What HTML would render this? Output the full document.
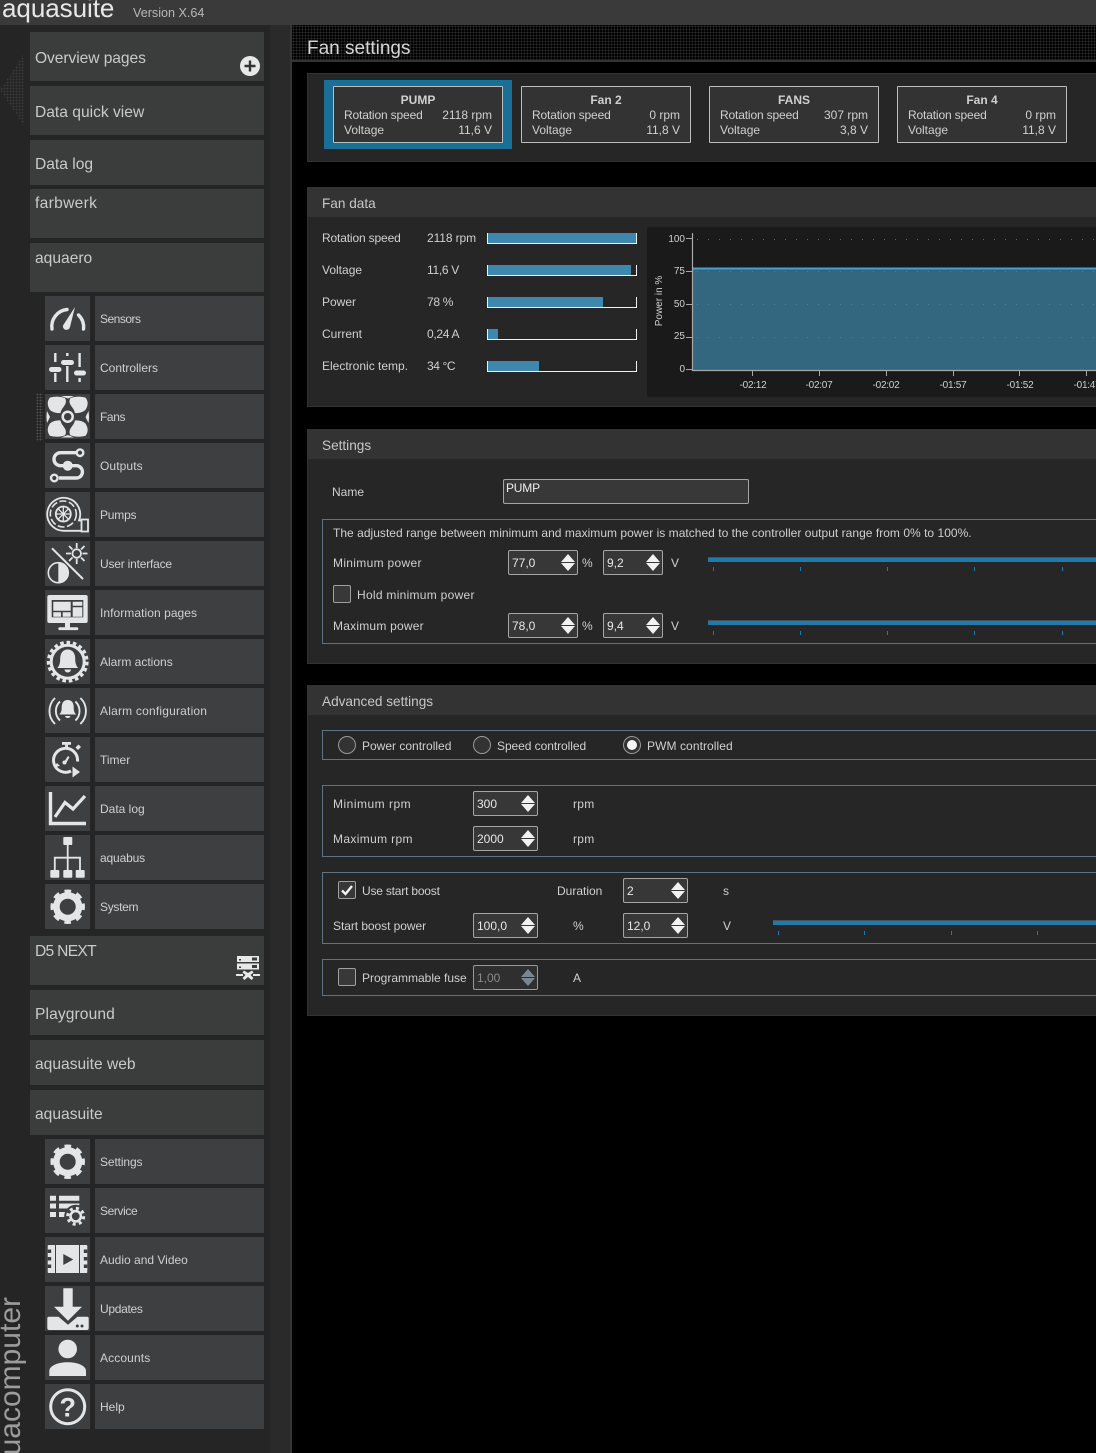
<!DOCTYPE html>
<html><head><meta charset="utf-8"><title>aquasuite</title>
<style>
html,body{margin:0;padding:0;background:#000;}
#r{position:relative;width:1096px;height:1453px;overflow:hidden;background:#000;font-family:"Liberation Sans",sans-serif;font-size:12px;color:#cfd0d0;}
#r div,#r svg{position:absolute;}
.t{position:absolute;white-space:pre;line-height:16px;}
.m{left:30px;width:234px;background:#3b3d3d;}
.i{left:45px;width:45px;height:45px;background:#3d3f41;}
.l{left:95px;width:169px;height:45px;background:#3d3f41;}
.mt{left:35px;font-size:15.6px;line-height:18px;color:#c9caca;}
.lt{left:100px;color:#cfd0d0;}
.p{left:307px;width:800px;background:#262626;border:1px solid #333;box-sizing:border-box;}
.h{left:307px;width:800px;height:30px;background:#333;}
.ht{left:322px;font-size:13.6px;color:#c8c8c8;}
.c{width:170px;height:57px;background:#333;border:1px solid #bdbdbd;box-sizing:border-box;border-radius:1px;}
.b{left:487px;width:150px;border:solid #f0f0f0;border-width:0 1px 1px 1px;box-sizing:border-box;height:11px;}
.f{left:488px;height:10px;background:#3e87ad;}
.box{left:322px;width:800px;border:1px solid #5f7385;box-sizing:border-box;}
.s{background:#373737;border:1px solid #a5a5a5;box-sizing:border-box;height:25px;border-radius:2px;color:#e8e8e8;line-height:25px;padding-left:3px;}
.s:before{content:"";position:absolute;right:2px;top:3px;border:solid transparent;border-width:0 7px 8px;border-bottom-color:#f2f2f2;}
.s:after{content:"";position:absolute;right:2px;bottom:3px;border:solid transparent;border-width:8px 7px 0;border-top-color:#f2f2f2;}
.s.d{color:#8a8a8a;border-color:#999;background:#2f2f2f;}
.s.d:before{border-bottom-color:#7b8790;}.s.d:after{border-top-color:#7b8790;}
.k{width:18px;height:18px;background:#383838;border:1px solid #a0a0a0;box-sizing:border-box;border-radius:2px;}
.o{width:18px;height:18px;background:#333;border:1px solid #9a9a9a;box-sizing:border-box;border-radius:50%;}
.tr{height:5px;background:#1f7ba9;border-top:1px solid #3f5660;box-sizing:border-box;}
.tk{width:1px;height:4px;background:#0f80b8;}
.rs{letter-spacing:-.15px;}
</style></head><body><div id="r">

<div style="left:0;top:25px;width:270px;height:1428px;background:#252525"></div>
<div style="left:270px;top:25px;width:20px;height:1428px;background:#2a2a2a"></div>
<div style="left:290px;top:25px;width:2px;height:1428px;background:#363636"></div>
<div style="left:0;top:0;width:1096px;height:25px;background:#3a3a3a"></div>
<div class="t" style="left:2px;top:-7px;font-size:26px;line-height:30px;color:#e8e8e8;letter-spacing:-.05px">aquasuite</div>
<div class="t" style="left:133px;top:5px;font-size:12.6px;color:#b8b8b8">Version X.64</div>

<div style="left:0;top:54px;width:24px;height:72px;background:radial-gradient(circle at 1.5px 1.5px,#3c3c3c .7px,transparent 1px) 0 0/3px 3px;clip-path:polygon(0 50%,100% 0,100% 100%)"></div>
<div style="left:36px;top:393px;width:7px;height:48px;background:radial-gradient(circle at 1.5px 1.5px,#4c4c4c .8px,transparent 1px) 0 0/3px 3px"></div>

<div class="m" style="top:32px;height:49px"></div><div class="t mt" style="top:50px;letter-spacing:-.07px">Overview pages</div>
<svg style="left:240px;top:56px" width="20" height="20"><circle cx="10" cy="10" r="10" fill="#e8e8e8"/><path d="M10 4.5v11M4.5 10h11" stroke="#333" stroke-width="2.4"/></svg>
<div class="m" style="top:86px;height:49px"></div><div class="t mt" style="top:104px">Data quick view</div>
<div class="m" style="top:140px;height:45px"></div><div class="t mt" style="top:156px">Data log</div>
<div class="m" style="top:189px;height:49px"></div><div class="t mt" style="top:195px;letter-spacing:.3px">farbwerk</div>
<div class="m" style="top:243px;height:49px"></div><div class="t mt" style="top:250px">aquaero</div>
<div class="m" style="top:936px;height:49px"></div><div class="t mt" style="top:943px;letter-spacing:-.7px">D5 NEXT</div>
<div class="m" style="top:990px;height:45px"></div><div class="t mt" style="top:1006px;letter-spacing:.1px">Playground</div>
<div class="m" style="top:1040px;height:45px"></div><div class="t mt" style="top:1056px">aquasuite web</div>
<div class="m" style="top:1090px;height:45px"></div><div class="t mt" style="top:1106px">aquasuite</div>
<svg style="left:236px;top:955px" width="24" height="27" fill="#e8e8e8"><rect x="1" y="1" width="22" height="6"/><rect x="1" y="8.5" width="22" height="6"/><path d="M16 2.5h5v3h-5zM16 10h5v3h-5zM3 4h2v1.500H3zM3 11.500h2V13H3z" fill="#3b3d3d"/><path d="M0 20h7M17 20h7" stroke="#e8e8e8" stroke-width="2"/><path d="M8 15.500l4 2.500 4-2.500 1.500 2-3 2.500 3 3-2 2-3.500-3-3.500 3-2-2 3-3-3-2.500z"/></svg>

<!-- sub rows -->
<div class="i" style="top:296px"></div><div class="l" style="top:296px"></div><div class="t lt" style="top:311px;letter-spacing:-.5px">Sensors</div>
<div class="i" style="top:345px"></div><div class="l" style="top:345px"></div><div class="t lt" style="top:360px">Controllers</div>
<div class="i" style="top:394px"></div><div class="l" style="top:394px"></div><div class="t lt" style="top:409px;letter-spacing:-.4px">Fans</div>
<div class="i" style="top:443px"></div><div class="l" style="top:443px"></div><div class="t lt" style="top:458px;letter-spacing:.1px">Outputs</div>
<div class="i" style="top:492px"></div><div class="l" style="top:492px"></div><div class="t lt" style="top:507px;letter-spacing:-.2px">Pumps</div>
<div class="i" style="top:541px"></div><div class="l" style="top:541px"></div><div class="t lt" style="top:556px;letter-spacing:-.2px">User interface</div>
<div class="i" style="top:590px"></div><div class="l" style="top:590px"></div><div class="t lt" style="top:605px;letter-spacing:.06px">Information pages</div>
<div class="i" style="top:639px"></div><div class="l" style="top:639px"></div><div class="t lt" style="top:654px">Alarm actions</div>
<div class="i" style="top:688px"></div><div class="l" style="top:688px"></div><div class="t lt" style="top:703px;letter-spacing:.2px">Alarm configuration</div>
<div class="i" style="top:737px"></div><div class="l" style="top:737px"></div><div class="t lt" style="top:752px">Timer</div>
<div class="i" style="top:786px"></div><div class="l" style="top:786px"></div><div class="t lt" style="top:801px">Data log</div>
<div class="i" style="top:835px"></div><div class="l" style="top:835px"></div><div class="t lt" style="top:850px;letter-spacing:-.15px">aquabus</div>
<div class="i" style="top:884px"></div><div class="l" style="top:884px"></div><div class="t lt" style="top:899px;letter-spacing:-.3px">System</div>
<div class="i" style="top:1139px"></div><div class="l" style="top:1139px"></div><div class="t lt" style="top:1154px;letter-spacing:-.12px">Settings</div>
<div class="i" style="top:1188px"></div><div class="l" style="top:1188px"></div><div class="t lt" style="top:1203px;letter-spacing:-.4px">Service</div>
<div class="i" style="top:1237px"></div><div class="l" style="top:1237px"></div><div class="t lt" style="top:1252px">Audio and Video</div>
<div class="i" style="top:1286px"></div><div class="l" style="top:1286px"></div><div class="t lt" style="top:1301px;letter-spacing:-.3px">Updates</div>
<div class="i" style="top:1335px"></div><div class="l" style="top:1335px"></div><div class="t lt" style="top:1350px;letter-spacing:.12px">Accounts</div>
<div class="i" style="top:1384px"></div><div class="l" style="top:1384px"></div><div class="t lt" style="top:1399px">Help</div>

<!-- icons -->
<svg style="left:0;top:0" width="300" height="1453" fill="#e3e5e7" stroke="none">
<text transform="translate(20,1297) rotate(-90)" text-anchor="end" font-family="Liberation Sans" font-size="30" fill="#9c9c9c">aquacomputer</text>
<!-- sensors -->
<g transform="translate(45,296)"><path d="M7 33A17 17 0 0 1 22 13.500" fill="none" stroke="#e3e5e7" stroke-width="3.400" stroke-linecap="round"/><path d="M33.500 19A17 17 0 0 1 38.500 33" fill="none" stroke="#e3e5e7" stroke-width="3.400" stroke-linecap="round"/><path d="M30 11L25 31a3.500 3.500 0 0 1-7-1.500z"/></g>
<!-- controllers -->
<g transform="translate(45,345)"><path d="M10.300 8v9M10.300 28v9M22.300 8v3M22.300 21v16M34.600 8v14M34.600 33v4" stroke="#e3e5e7" stroke-width="2.400" fill="none"/><rect x="4" y="22" width="12.500" height="5" rx="2.500"/><rect x="16" y="15" width="13" height="5" rx="2.500"/><rect x="29" y="25.500" width="12" height="5" rx="2.500"/></g>
<!-- fans -->
<g transform="translate(45,394)"><g id="bl"><path id="b1" d="M5 3.500Q13 1.500 20 4Q22.500 8 18.500 13Q16 16 15.500 19Q9 19.500 5 16Q0.500 9 5 3.500z"/></g><use href="#b1" transform="matrix(-1 0 0 1 45.400 0)"/><use href="#b1" transform="matrix(1 0 0 -1 0 45.400)"/><use href="#b1" transform="matrix(-1 0 0 -1 45.400 45.400)"/><path d="M2 17Q1 23 2 29l3-6zM43.500 17Q44.500 23 43.500 29l-3-6zM16 2h13l-6 2.500zM16 43.500h13l-6-2.500z"/><circle cx="22.700" cy="22.700" r="5" fill="#3d3f41" stroke="#e3e5e7" stroke-width="2.500"/></g>
<!-- outputs -->
<g transform="translate(45,443)" fill="none" stroke="#e3e5e7"><path d="M31 9.700H15.500a6.500 6.500 0 0 0 0 13H32a6.200 6.200 0 0 1 0 12.300H14" stroke-width="3.400"/><circle cx="35" cy="9.700" r="3.300" stroke-width="2.400"/><circle cx="9.300" cy="35" r="3.300" stroke-width="2.400"/><circle cx="22.700" cy="22.700" r="5" fill="#e3e5e7" stroke="none"/></g>
<!-- pumps -->
<g transform="translate(45,492)" fill="none" stroke="#e3e5e7"><path d="M36 28.500H34A16.500 16.500 0 1 0 18.300 38.800H36" stroke-width="1.800"/><rect x="36.500" y="27.500" width="6.500" height="12" stroke-width="1.800"/><circle cx="18.300" cy="22" r="13" stroke-width="1.600" stroke-dasharray="7 2.500"/><circle cx="18.300" cy="22" r="7.500" stroke-width="1.800"/><path d="M18.300 14.500v15M10.800 22h15M13 16.700l10.600 10.600M23.600 16.700L13 27.300" stroke-width="1.300"/></g>
<!-- UI -->
<g transform="translate(45,541)"><path d="M7 7.300L38 38" stroke="#e3e5e7" stroke-width="2" fill="none"/><path d="M31.700 2v5M31.700 18v5M21 12.500h5M37.500 12.500h5M24 5l3.500 3.500M36 16.500l3.500 3.500M39.500 5L36 8.500M27.500 16.500L24 20" stroke="#e3e5e7" stroke-width="1.800" fill="none"/><circle cx="31.700" cy="12.500" r="4.300" fill="none" stroke="#e3e5e7" stroke-width="1.800"/><circle cx="13.300" cy="31.700" r="10" fill="none" stroke="#e3e5e7" stroke-width="1.600"/><path d="M13.300 21.700a10 10 0 0 1 0 20z"/></g>
<!-- info -->
<g transform="translate(45,590)"><rect x="2.300" y="5" width="40.400" height="28" rx="2"/><rect x="6.700" y="10" width="31.600" height="17.300" fill="#3d3f41"/><path d="M8.300 11.700h17.400v9H8.300zM27.700 11.700h9.600v4h-9.600zM27.700 17.300h9.600v9.400h-9.600zM8.300 22.300H16v4.400H8.300zM17.700 22.300h8v4.400h-8zM20 33h5v4.500h-5z"/><rect x="13.300" y="37.300" width="20" height="2.800" rx="1.400"/></g>
<!-- alarm actions -->
<g transform="translate(45,639)"><circle cx="22.700" cy="22.700" r="16.500" fill="none" stroke="#e3e5e7" stroke-width="3"/><circle cx="22.700" cy="22.700" r="19.300" fill="none" stroke="#e3e5e7" stroke-width="3.200" stroke-dasharray="3.600 2.800"/><path d="M22.700 10.500c-5 0-7.500 4-7.500 9 0 5-1 7.500-3 9.500h21c-2-2-3-4.500-3-9.500 0-5-2.500-9-7.500-9z"/><path d="M19.500 30.500h6.500a3.200 3 0 0 1-6.500 0z"/></g>
<!-- alarm config -->
<g transform="translate(45,688)"><path d="M22.700 12c-4 0-6 3-6 7 0 4-.8 6-2.500 7.500h17c-1.700-1.500-2.500-3.500-2.500-7.500 0-4-2-7-6-7z"/><path d="M20 28h5.500a2.800 2.500 0 0 1-5.500 0z"/><path d="M10 10A18 18 0 0 0 10 36M15 13.500A13 13 0 0 0 15 32.500M35.400 10A18 18 0 0 1 35.400 36M30.400 13.500A13 13 0 0 1 30.400 32.500" fill="none" stroke="#e3e5e7" stroke-width="1.900"/></g>
<!-- timer -->
<g transform="translate(45,737)"><path d="M17 5h9v2.800h-9z"/><path d="M20.200 7h2.800v5h-2.800z"/><path d="M30.500 10.500l3-3 2.500 2.500-3 3z"/><path d="M26 34A12 12 0 1 1 32.500 24.500" fill="none" stroke="#e3e5e7" stroke-width="3"/><path d="M9 30l3-4 3 3z"/><path d="M19 25l4-6 1.500 1-3.500 6.500z"/><circle cx="19.500" cy="25.500" r="2"/><path d="M27.500 29.500L35 35l-7.500 5.500z"/></g>
<!-- data log -->
<g transform="translate(45,786)" fill="none" stroke="#e3e5e7"><path d="M5.500 6V37.500H41" stroke-width="3.400"/><path d="M10 31L20 16.500 28 23 40 10" stroke-width="3.200"/></g>
<!-- aquabus -->
<g transform="translate(45,835)"><rect x="18.300" y="2" width="9" height="8" rx="1"/><path d="M22.700 10V35M9.800 35V22.700H35V35" fill="none" stroke="#e3e5e7" stroke-width="1.800"/><rect x="5.300" y="35" width="9" height="7.700" rx="1"/><rect x="18.300" y="35" width="9" height="7.700" rx="1"/><rect x="30.700" y="35" width="9" height="7.700" rx="1"/></g>
<!-- gears -->
<g transform="translate(45,884)"><circle cx="22.700" cy="22.700" r="11.300" fill="none" stroke="#e3e5e7" stroke-width="6.600"/><circle cx="22.700" cy="22.700" r="15" fill="none" stroke="#e3e5e7" stroke-width="4.500" stroke-dasharray="6.300 5.480" stroke-dashoffset="3.150"/></g>
<g transform="translate(45,1139)"><circle cx="22.700" cy="22.700" r="11.300" fill="none" stroke="#e3e5e7" stroke-width="6.600"/><circle cx="22.700" cy="22.700" r="15" fill="none" stroke="#e3e5e7" stroke-width="4.500" stroke-dasharray="6.300 5.480" stroke-dashoffset="3.150"/></g>
<!-- service -->
<g transform="translate(45,1188)"><path d="M5 7.700h6v5H5zM14 7.700h20.300v5H14zM5 15.500h6v5H5zM14 15.500h20.300v5H14zM5 24h6v5H5zM14 24h9v5H14z"/><circle cx="30.700" cy="28.300" r="11.500" fill="#3d3f41"/><circle cx="30.700" cy="28.300" r="5.200" fill="none" stroke="#e3e5e7" stroke-width="2.600"/><circle cx="30.700" cy="28.300" r="8" fill="none" stroke="#e3e5e7" stroke-width="3" stroke-dasharray="3 3.280"/></g>
<!-- av -->
<g transform="translate(45,1237)"><rect x="2.700" y="8" width="39.600" height="28" rx="1"/><path d="M2.700 12.500h3.500v3.500H2.700zM2.700 20h3.500v3.500H2.700zM2.700 27.500h3.500V31H2.700zM38.800 12.500h3.500v3.500h-3.500zM38.800 20h3.500v3.500h-3.500zM38.800 27.500h3.500V31h-3.500zM18.300 17l10 5.500-10 5.500z" fill="#3d3f41"/><path d="M10 8h1v28h-1zM34 8h1v28h-1z" fill="#3d3f41"/></g>
<!-- updates -->
<g transform="translate(45,1286)"><path d="M18.300 2.300h9.400v18.400H37L23 34.700 9 20.700h9.300z"/><path d="M4 30.700h9.500l9.500 8 9.500-8H42a1.700 1.700 0 0 1 1.700 1.700V42a2 2 0 0 1-2 2H4.300a2 2 0 0 1-2-2V32.400a1.700 1.700 0 0 1 1.700-1.700z"/><circle cx="32.300" cy="40" r="1.500" fill="#3d3f41"/><circle cx="37" cy="40" r="1.500" fill="#3d3f41"/></g>
<!-- accounts -->
<g transform="translate(45,1335)"><circle cx="22.700" cy="14" r="9.300"/><path d="M4.300 41v-5c0-5 8-8.700 18.400-8.700S41 31 41 36v5z"/></g>
<!-- help -->
<g transform="translate(45,1384)"><circle cx="22.700" cy="22.700" r="17" fill="none" stroke="#e3e5e7" stroke-width="3"/><text x="22.700" y="32.500" text-anchor="middle" font-family="Liberation Sans" font-weight="bold" font-size="27">?</text></g>
</svg>

<!-- main title -->
<div style="left:292px;top:25px;width:804px;height:36px;background:radial-gradient(circle at 1.500px 1.500px,#2e2e2e .9px,transparent 1.100px) 0 0/3px 3px"></div>
<div style="left:292px;top:60px;width:804px;height:2px;background:#333"></div>
<div class="t" style="left:307px;top:38px;font-size:19px;line-height:22px;color:#d6d6d6">Fan settings</div>

<!-- cards panel -->
<div class="p" style="top:73px;height:89px"></div>
<div style="left:324px;top:80px;width:188px;height:69px;background:#1a6f96"></div>
<div class="c" style="left:333px;top:86px"></div>
<div class="c" style="left:521px;top:86px"></div>
<div class="c" style="left:709px;top:86px"></div>
<div class="c" style="left:897px;top:86px"></div>
<div class="t" style="left:333px;width:170px;text-align:center;top:92px;font-weight:bold">PUMP</div>
<div class="t rs" style="left:344px;top:107px">Rotation speed</div><div class="t" style="left:344px;top:122px">Voltage</div>
<div class="t" style="right:604px;top:107px">2118 rpm</div><div class="t" style="right:604px;top:122px">11,6 V</div>
<div class="t" style="left:521px;width:170px;text-align:center;top:92px;font-weight:bold">Fan 2</div>
<div class="t rs" style="left:532px;top:107px">Rotation speed</div><div class="t" style="left:532px;top:122px">Voltage</div>
<div class="t" style="right:416px;top:107px">0 rpm</div><div class="t" style="right:416px;top:122px">11,8 V</div>
<div class="t" style="left:709px;width:170px;text-align:center;top:92px;font-weight:bold">FANS</div>
<div class="t rs" style="left:720px;top:107px">Rotation speed</div><div class="t" style="left:720px;top:122px">Voltage</div>
<div class="t" style="right:228px;top:107px">307 rpm</div><div class="t" style="right:228px;top:122px">3,8 V</div>
<div class="t" style="left:897px;width:170px;text-align:center;top:92px;font-weight:bold">Fan 4</div>
<div class="t rs" style="left:908px;top:107px">Rotation speed</div><div class="t" style="left:908px;top:122px">Voltage</div>
<div class="t" style="right:40px;top:107px">0 rpm</div><div class="t" style="right:40px;top:122px">11,8 V</div>

<!-- fan data -->
<div class="p" style="top:187px;height:220px"></div><div class="h" style="top:187px"></div>
<div class="t ht" style="top:196px">Fan data</div>
<div class="t rs" style="left:322px;top:230px">Rotation speed</div><div class="t" style="left:427px;top:230px;letter-spacing:-.1px">2118 rpm</div>
<div class="t" style="left:322px;top:262px">Voltage</div><div class="t" style="left:427px;top:262px;letter-spacing:-.3px">11,6 V</div>
<div class="t" style="left:322px;top:294px">Power</div><div class="t" style="left:427px;top:294px;letter-spacing:-.3px">78 %</div>
<div class="t" style="left:322px;top:326px">Current</div><div class="t" style="left:427px;top:326px;letter-spacing:-.3px">0,24 A</div>
<div class="t" style="left:322px;top:358px">Electronic temp.</div><div class="t" style="left:427px;top:358px;letter-spacing:-.4px">34 °C</div>
<div class="b" style="top:233px"></div><div class="f" style="top:233px;width:148px"></div>
<div class="b" style="top:265px"></div><div class="f" style="top:265px;width:143px"></div>
<div class="b" style="top:297px"></div><div class="f" style="top:297px;width:115px"></div>
<div class="b" style="top:329px"></div><div class="f" style="top:329px;width:10px"></div>
<div class="b" style="top:361px"></div><div class="f" style="top:361px;width:51px"></div>

<svg style="left:647px;top:227px" width="449" height="170" font-family="Liberation Sans" font-size="10" fill="#d0d0d0">
<rect width="460" height="170" rx="2" fill="#1a1a1a"/>
<rect x="46" y="41" width="403" height="102" fill="#33667f"/>
<rect x="46" y="40.500" width="403" height="2" fill="#47a0cf"/>
<path d="M50 12.500H449" stroke="#666" stroke-width="1" stroke-dasharray="1 10" fill="none"/>
<path d="M50 44.500H449M50 77.500H449M50 110.500H449" stroke="#4f7d92" stroke-width="1" stroke-dasharray="1 10" fill="none"/>
<path d="M45.500 6V143.500H449" stroke="#a8a8a8" stroke-width="1.200" fill="none"/>
<path d="M39 11.500h6M39 44.500h6M39 77.500h6M39 110.500h6M39 142.500h6M105.500 143v6M172.500 143v6M239.500 143v6M306.500 143v6M372.500 143v6M439.500 143v6" stroke="#a8a8a8" stroke-width="1" fill="none"/>
<g text-anchor="end"><text x="38" y="15">100</text><text x="38" y="47">75</text><text x="38" y="80">50</text><text x="38" y="112">25</text><text x="38" y="145">0</text></g>
<g text-anchor="middle" letter-spacing="-.25"><text x="106" y="161">-02:12</text><text x="172" y="161">-02:07</text><text x="239" y="161">-02:02</text><text x="306" y="161">-01:57</text><text x="373" y="161">-01:52</text><text x="440" y="161">-01:47</text></g>
<text transform="translate(15,74) rotate(-90)" text-anchor="middle">Power in %</text>
</svg>

<!-- settings -->
<div class="p" style="top:429px;height:235px"></div><div class="h" style="top:429px"></div>
<div class="t ht" style="top:438px">Settings</div>
<div class="t" style="left:332px;top:484px">Name</div>
<div style="left:503px;top:479px;width:246px;height:25px;background:#383838;border:1px solid #a5a5a5;box-sizing:border-box;border-radius:2px"></div>
<div class="t" style="left:506px;top:480px;color:#eee;letter-spacing:-.2px">PUMP</div>
<div class="box" style="top:519px;height:125px"></div>
<div class="t" style="left:333px;top:525px;letter-spacing:.027px">The adjusted range between minimum and maximum power is matched to the controller output range from 0% to 100%.</div>
<div class="t" style="left:333px;top:555px;letter-spacing:.32px">Minimum power</div>
<div class="s" style="left:508px;top:550px;width:70px">77,0</div><div class="t" style="left:582px;top:555px">%</div>
<div class="s" style="left:603px;top:550px;width:60px">9,2</div><div class="t" style="left:671px;top:555px">V</div>
<div class="tr" style="left:708px;top:557px;width:388px"></div>
<div class="tk" style="left:713px;top:567px"></div><div class="tk" style="left:800px;top:567px"></div><div class="tk" style="left:887px;top:567px"></div><div class="tk" style="left:974px;top:567px"></div><div class="tk" style="left:1062px;top:567px"></div>
<div class="k" style="left:333px;top:585px"></div><div class="t" style="left:357px;top:587px;letter-spacing:.28px">Hold minimum power</div>
<div class="t" style="left:333px;top:618px;letter-spacing:.22px">Maximum power</div>
<div class="s" style="left:508px;top:613px;width:70px">78,0</div><div class="t" style="left:582px;top:618px">%</div>
<div class="s" style="left:603px;top:613px;width:60px">9,4</div><div class="t" style="left:671px;top:618px">V</div>
<div class="tr" style="left:708px;top:620px;width:388px"></div>
<div class="tk" style="left:713px;top:631px"></div><div class="tk" style="left:800px;top:631px"></div><div class="tk" style="left:887px;top:631px"></div><div class="tk" style="left:974px;top:631px"></div><div class="tk" style="left:1062px;top:631px"></div>

<!-- advanced -->
<div class="p" style="top:685px;height:331px"></div><div class="h" style="top:685px"></div>
<div class="t ht" style="top:694px">Advanced settings</div>
<div class="box" style="top:730px;height:30px"></div>
<div class="o" style="left:338px;top:736px"></div><div class="t" style="left:362px;top:738px">Power controlled</div>
<div class="o" style="left:473px;top:736px"></div><div class="t" style="left:497px;top:738px;letter-spacing:-.06px">Speed controlled</div>
<div class="o" style="left:623px;top:736px"></div><div style="left:627px;top:740px;width:10px;height:10px;border-radius:50%;background:#f5f5f5"></div><div class="t" style="left:647px;top:738px;letter-spacing:.08px">PWM controlled</div>

<div class="box" style="top:785px;height:72px"></div>
<div class="t" style="left:333px;top:796px;letter-spacing:.5px">Minimum rpm</div><div class="s" style="left:473px;top:791px;width:65px">300</div><div class="t" style="left:573px;top:796px;letter-spacing:.3px">rpm</div>
<div class="t" style="left:333px;top:831px;letter-spacing:.35px">Maximum rpm</div><div class="s" style="left:473px;top:826px;width:65px">2000</div><div class="t" style="left:573px;top:831px;letter-spacing:.3px">rpm</div>

<div class="box" style="top:872px;height:72px"></div>
<div class="k" style="left:338px;top:881px"></div>
<svg style="left:338px;top:881px" width="18" height="18"><path d="M4 9.500l3.500 3.500L14 5" fill="none" stroke="#f2f2f2" stroke-width="2.400"/></svg>
<div class="t" style="left:362px;top:883px;letter-spacing:-.2px">Use start boost</div>
<div class="t" style="left:557px;top:883px">Duration</div><div class="s" style="left:623px;top:878px;width:65px">2</div><div class="t" style="left:723px;top:883px">s</div>
<div class="t" style="left:333px;top:918px;letter-spacing:-.06px">Start boost power</div><div class="s" style="left:473px;top:913px;width:65px">100,0</div><div class="t" style="left:573px;top:918px">%</div>
<div class="s" style="left:623px;top:913px;width:65px">12,0</div><div class="t" style="left:723px;top:918px">V</div>
<div class="tr" style="left:773px;top:920px;width:323px"></div>
<div class="tk" style="left:778px;top:931px"></div><div class="tk" style="left:864px;top:931px"></div><div class="tk" style="left:951px;top:931px"></div><div class="tk" style="left:1037px;top:931px"></div>

<div class="box" style="top:959px;height:37px"></div>
<div class="k" style="left:338px;top:968px"></div><div class="t" style="left:362px;top:970px">Programmable fuse</div>
<div class="s d" style="left:473px;top:965px;width:65px">1,00</div>
<div class="t" style="left:573px;top:970px">A</div>

</div></body></html>
